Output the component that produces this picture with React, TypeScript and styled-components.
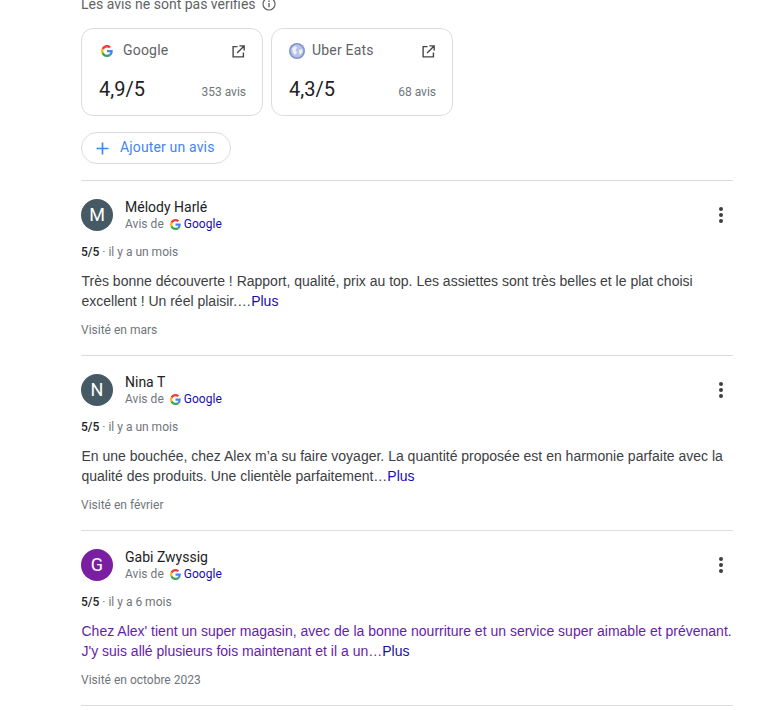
import React from "react";
import styled, { createGlobalStyle } from "styled-components";

const GlobalStyle = createGlobalStyle`
  html, body {
    margin: 0;
    padding: 0;
    background: #fff;
    overflow: hidden;
  }
  body {
    font-family: "Liberation Sans", Arial, sans-serif;
  }
`;

const Page = styled.div`
  width: 652px;
  height: 710px;
  margin-left: 81px;
  overflow: hidden;
`;

const Inner = styled.div`
  margin-top: -6px;
`;

const Notice = styled.div`
  display: flex;
  align-items: center;
  gap: 6px;
  height: 20px;
  font: 14px/20px Roboto, sans-serif;
  color: #5f6368;
`;

const SourceRow = styled.div`
  display: flex;
  gap: 8px;
  margin-top: 14px;
`;

const SourceCard = styled.div`
  box-sizing: border-box;
  width: 182px;
  height: 88px;
  padding: 14px 16px 0 17px;
  border: 1px solid #dadce0;
  border-radius: 12px;
`;

const SourceHead = styled.div`
  display: flex;
  align-items: center;
  height: 16px;
  font: 14px/16px Roboto, sans-serif;
  letter-spacing: 0.2px;
  color: #5f6368;
`;

const SourceLogo = styled.span`
  display: flex;
  margin-left: 2px;
`;

const SourceName = styled.span<{ $gap: number }>`
  flex: 1;
  margin: 0 0 2px ${(p) => p.$gap}px;
`;

const OpenLink = styled.span`
  display: flex;
  margin-right: 1px;
`;

const SourceFoot = styled.div`
  display: flex;
  justify-content: space-between;
  align-items: baseline;
  margin-top: 17px;
`;

const Score = styled.span`
  font: 20px/26px Roboto, sans-serif;
  color: #202124;
`;

const Count = styled.span`
  font: 12px/16px Roboto, sans-serif;
  color: #70757a;
`;

const AddButton = styled.div`
  box-sizing: border-box;
  display: inline-flex;
  align-items: center;
  gap: 11px;
  width: 150px;
  height: 32px;
  margin-top: 16px;
  padding-left: 14px;
  border: 1px solid #dadce0;
  border-radius: 16px;
  font: 14px/20px Roboto, sans-serif;
  letter-spacing: 0.15px;
  color: #4285f4;
`;

const AddLabel = styled.span`
  margin-bottom: 2px;
`;

const Review = styled.div`
  box-sizing: border-box;
  height: 175px;
  padding-top: 18px;
  border-top: 1px solid #dadce0;
`;

const FirstDivider = styled.div`
  height: 16px;
`;

const ReviewHead = styled.div`
  display: flex;
  align-items: flex-start;
`;

const Avatar = styled.div<{ $color: string }>`
  display: flex;
  align-items: center;
  justify-content: center;
  flex: none;
  width: 32px;
  height: 32px;
  border-radius: 50%;
  background: ${(p) => p.$color};
  font: 18px/32px Roboto, sans-serif;
  color: #fff;
`;

const Author = styled.div`
  flex: 1;
  margin-left: 12px;
`;

const AuthorName = styled.div`
  font: 14px/18px Roboto, sans-serif;
  color: #202124;
  margin-top: -1px;
`;

const Via = styled.div`
  display: flex;
  align-items: center;
  height: 16px;
  font: 12px/16px Roboto, sans-serif;
  letter-spacing: 0.03px;
  color: #70757a;
`;

const ViaLink = styled.span`
  margin-left: 3px;
  color: #1a0dab;
`;

const ViaIcon = styled.span`
  display: flex;
  margin-left: 6px;
`;

const MoreButton = styled.div`
  display: flex;
  flex-direction: column;
  gap: 2px;
  margin: 8px 10px 0 0;
`;

const Dot = styled.span`
  width: 4px;
  height: 4px;
  border-radius: 50%;
  background: #3c4043;
`;

const Rating = styled.div`
  margin-top: 12px;
  font: 12px/16px Roboto, sans-serif;
  color: #70757a;
`;

const RatingValue = styled.span`
  font-weight: 500;
  color: #202124;
`;

const ReviewText = styled.div<{ $visited?: boolean }>`
  margin-top: 11px;
  padding-left: 0.5px;
  font: 14px/20px "Liberation Sans", Arial, sans-serif;
  color: ${(p) => (p.$visited ? "#681da8" : "#3c4043")};
`;

const MoreLink = styled.span`
  color: #1a0dab;
`;

const VisitDate = styled.div`
  margin-top: 11px;
  font: 12px/16px Roboto, sans-serif;
  color: #70757a;
`;

const GoogleLogo = ({ size }: { size: number }) => (
  <svg width={size} height={size} viewBox="0 0 48 48">
    <path fill="#EA4335" d="M24 9.5c3.5 0 6.700 1.300 9.100 3.500l6.800-6.800C35.800 2.400 30.300 0 24 0 14.600 0 6.500 5.400 2.600 13.200l7.900 6.200C12.400 13.700 17.700 9.500 24 9.500z" />
    <path fill="#4285F4" d="M46.900 24.500c0-1.600-.1-3.100-.4-4.500H24v9h12.900c-.6 3-2.200 5.500-4.700 7.200l7.600 5.900c4.400-4.100 7.100-10.100 7.100-17.600z" />
    <path fill="#FBBC05" d="M10.500 28.600c-.5-1.400-.8-3-.8-4.600s.3-3.200.8-4.600l-7.900-6.200C.9 16.500 0 20.100 0 24s.9 7.500 2.600 10.800l7.900-6.200z" />
    <path fill="#34A853" d="M24 48c6.500 0 11.900-2.100 15.800-5.900l-7.600-5.900c-2.100 1.400-4.900 2.300-8.200 2.300-6.300 0-11.600-4.200-13.500-9.900l-7.900 6.200C6.500 42.600 14.600 48 24 48z" />
  </svg>
);

const GlobeLogo = () => (
  <svg width={16} height={16} viewBox="0 0 16 16">
    <circle cx="8" cy="8" r="8" fill="#7f93d1" />
    <circle cx="8" cy="8" r="6.400" fill="#b9c3e2" />
    <path fill="#eef0f8" d="M3 5.500 6 3l2 1.500L6.500 7 8 9.500 6 12 4 9.500zM10 7l3-1 .5 3-2.500 3-1-2.500z" />
  </svg>
);

const OpenIcon = () => (
  <svg width={13} height={13} viewBox="0 0 14 14" fill="none" stroke="#444746" strokeWidth="1.500">
    <path d="M6 1.700H1.200v11.100h11.100V8M8 .9h5.100V6M13 1 5.500 8.500" />
  </svg>
);

const InfoIcon = () => (
  <svg width={14} height={14} viewBox="0 0 14 14" fill="none">
    <circle cx="7" cy="7" r="6" stroke="#5f6368" strokeWidth="1.200" />
    <path stroke="#5f6368" strokeWidth="1.400" d="M7 6v4.200M7 3.500v1.400" />
  </svg>
);

const PlusIcon = () => (
  <svg width={13} height={13} viewBox="0 0 14 14" stroke="#4285f4" strokeWidth="1.800">
    <path d="M7 .5v13M.5 7h13" />
  </svg>
);

const reviews = [
  {
    initial: "M",
    color: "#455a64",
    name: "Mélody Harlé",
    when: "il y a un mois",
    lines: [
      "Très bonne découverte ! Rapport, qualité, prix au top. Les assiettes sont très belles et le plat choisi",
      "excellent ! Un réel plaisir.…",
    ],
    visit: "Visité en mars",
  },
  {
    initial: "N",
    color: "#455a64",
    name: "Nina T",
    when: "il y a un mois",
    lines: [
      "En une bouchée, chez Alex m’a su faire voyager. La quantité proposée est en harmonie parfaite avec la",
      "qualité des produits. Une clientèle parfaitement…",
    ],
    visit: "Visité en février",
  },
  {
    initial: "G",
    color: "#7b1fa2",
    name: "Gabi Zwyssig",
    when: "il y a 6 mois",
    lines: [
      "Chez Alex' tient un super magasin, avec de la bonne nourriture et un service super aimable et prévenant.",
      "J'y suis allé plusieurs fois maintenant et il a un…",
    ],
    visit: "Visité en octobre 2023",
    visited: true,
  },
];

export default function App() {
  return (
    <Page>
      <GlobalStyle />
      <Inner>
        <Notice>
          Les avis ne sont pas vérifiés <InfoIcon />
        </Notice>
        <SourceRow>
          <SourceCard>
            <SourceHead>
              <SourceLogo>
                <GoogleLogo size={12} />
              </SourceLogo>
              <SourceName $gap={10}>Google</SourceName>
              <OpenLink>
                <OpenIcon />
              </OpenLink>
            </SourceHead>
            <SourceFoot>
              <Score>4,9/5</Score>
              <Count>353 avis</Count>
            </SourceFoot>
          </SourceCard>
          <SourceCard>
            <SourceHead>
              <GlobeLogo />
              <SourceName $gap={7}>Uber Eats</SourceName>
              <OpenLink>
                <OpenIcon />
              </OpenLink>
            </SourceHead>
            <SourceFoot>
              <Score>4,3/5</Score>
              <Count>68 avis</Count>
            </SourceFoot>
          </SourceCard>
        </SourceRow>
        <AddButton>
          <PlusIcon />
          <AddLabel>Ajouter un avis</AddLabel>
        </AddButton>
        <FirstDivider />
        {reviews.map((r) => (
          <Review key={r.name}>
            <ReviewHead>
              <Avatar $color={r.color}>{r.initial}</Avatar>
              <Author>
                <AuthorName>{r.name}</AuthorName>
                <Via>
                  Avis de
                  <ViaIcon>
                    <GoogleLogo size={11} />
                  </ViaIcon>
                  <ViaLink>Google</ViaLink>
                </Via>
              </Author>
              <MoreButton>
                <Dot />
                <Dot />
                <Dot />
              </MoreButton>
            </ReviewHead>
            <Rating>
              <RatingValue>5/5</RatingValue> · {r.when}
            </Rating>
            <ReviewText $visited={r.visited}>
              {r.lines[0]}
              <br />
              {r.lines[1]}
              <MoreLink>Plus</MoreLink>
            </ReviewText>
            <VisitDate>{r.visit}</VisitDate>
          </Review>
        ))}
        <Review />
      </Inner>
    </Page>
  );
}
